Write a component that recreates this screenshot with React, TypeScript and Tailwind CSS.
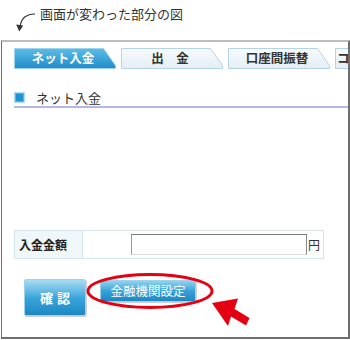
import React from "react";

const jp = { fontFamily: '"Noto Sans CJK JP", "Noto Sans", sans-serif' };

function Tab({ label, active = false, left = false }: { label: string; active?: boolean; left?: boolean }) {
  return (
    <div
      className={`relative flex h-[21px] w-[102px] shrink-0 items-center ${left ? "justify-start pl-[2px]" : "justify-center pr-[4px]"}`}
    >
      <svg className="absolute inset-0" width="102" height="21" viewBox="0 0 102 21">
        <defs>
          <linearGradient id="tabBlue" x1="0" y1="0" x2="0" y2="1">
            <stop offset="0" stopColor="#5cbde6" />
            <stop offset="1" stopColor="#208ccb" />
          </linearGradient>
          <linearGradient id="tabLight" x1="0" y1="0" x2="0" y2="1">
            <stop offset="0" stopColor="#f8fbfd" />
            <stop offset="1" stopColor="#e3eef4" />
          </linearGradient>
        </defs>
        <path
          d="M0.5 0.5 H89.5 L101.5 17.5 V20.5 H0.5 Z"
          fill={active ? "url(#tabBlue)" : "url(#tabLight)"}
          stroke={active ? "#9fd3ee" : "#b4d3e4"}
          strokeWidth="1"
        />
      </svg>
      <span
        className={`relative text-[12.5px] font-bold leading-none ${active ? "text-white" : "text-[#333]"}`}
        style={jp}
      >
        {label}
      </span>
    </div>
  );
}

export default function App() {
  return (
    <div className="relative h-[340px] w-[350px] overflow-hidden bg-white" style={jp}>
      {/* caption */}
      <div className="flex h-[40px] items-start">
        <svg width="40" height="40" viewBox="0 0 40 40" className="shrink-0">
          <path d="M35 14 C 27 13.5 21.5 18 20.3 25.5" fill="none" stroke="#333" strokeWidth="1.1" />
          <path d="M19.3 31.5 L16.2 24.6 L23.2 25.6 Z" fill="#333" />
        </svg>
        <span className="mt-[5px] text-[13px] leading-[18px] text-[#333]">画面が変わった部分の図</span>
      </div>

      {/* frame */}
      <div className="ml-px h-[299px] w-[349px] overflow-hidden border-t-2 border-r-2 border-b-2 border-l border-t-[#bdbdbd] border-r-[#6e6e6e] border-b-[#6e6e6e] border-l-[#6e6e6e]">
        <div className="pl-[12px]">
          <div className="mt-[6px] flex gap-[5px]">
            <Tab label="ネット入金" active />
            <Tab label="出　金" />
            <Tab label="口座間振替" />
            <Tab label="コンビニ入金" left />
          </div>

          <div className="mt-[21px] flex h-[14px] items-center">
            <span className="h-[11px] w-[11px] border border-[#b2dcf3] bg-[#2392d2] shadow-[inset_0_0_0_1px_#5fb2e0]" />
            <span className="ml-[11px] text-[13px] leading-none text-[#333]">ネット入金</span>
          </div>
          <div className="mt-[2px] h-[2px] bg-[#b6b6ef]" />

          <div className="mt-[122px] flex h-[29px] w-[310px] border border-[#d4e5ee]">
            <div className="flex w-[68px] items-center border-r border-[#d4e5ee] bg-[#eff7fb] pl-[4px]">
              <span className="text-[12px] font-bold leading-none text-[#222]">入金金額</span>
            </div>
            <div className="flex flex-1 items-center pl-[48px]">
              <div className="h-[21px] w-[176px] border border-t-[#7c7c7c] border-l-[#9a9a9a] border-r-[#8a8a8a] border-b-[#dcdcdc] bg-white" />
              <span className="ml-[1px] text-[12px] leading-none text-[#333]">円</span>
            </div>
          </div>

          <div className="mt-[20px] flex items-start pl-[10px]">
            <button className="flex h-[37px] w-[62px] items-center justify-center rounded-[2px] border border-[#9dd3ec] bg-gradient-to-b from-[#a6dcf2] via-[#3ba6db] to-[#1c87c3] shadow-[1px_1px_1px_rgba(0,0,0,0.2)]">
              <span className="pl-[4px] text-[13px] font-bold tracking-[4px] text-white">確認</span>
            </button>
            <button className="mt-[1px] ml-[14px] flex h-[22px] w-[96px] items-center justify-center rounded-[2px] border border-[#9dd3ec] bg-gradient-to-b from-[#8fd3f0] via-[#34a2d9] to-[#1c87c3] shadow-[1px_1px_1px_rgba(0,0,0,0.2)]">
              <span className="text-[12.5px] leading-none text-white">金融機関設定</span>
            </button>
          </div>
        </div>
      </div>

      {/* annotations */}
      <svg className="pointer-events-none absolute inset-0" width="350" height="340" viewBox="0 0 350 340">
        <ellipse cx="150" cy="291" rx="62" ry="16.5" fill="none" stroke="#e50012" strokeWidth="3" />
        <path
          d="M212 303 L238 298.5 L234.5 309 L249.5 318 L246 325.5 L231 316.5 L228 326 Z"
          fill="#e50012"
        />
      </svg>
    </div>
  );
}
